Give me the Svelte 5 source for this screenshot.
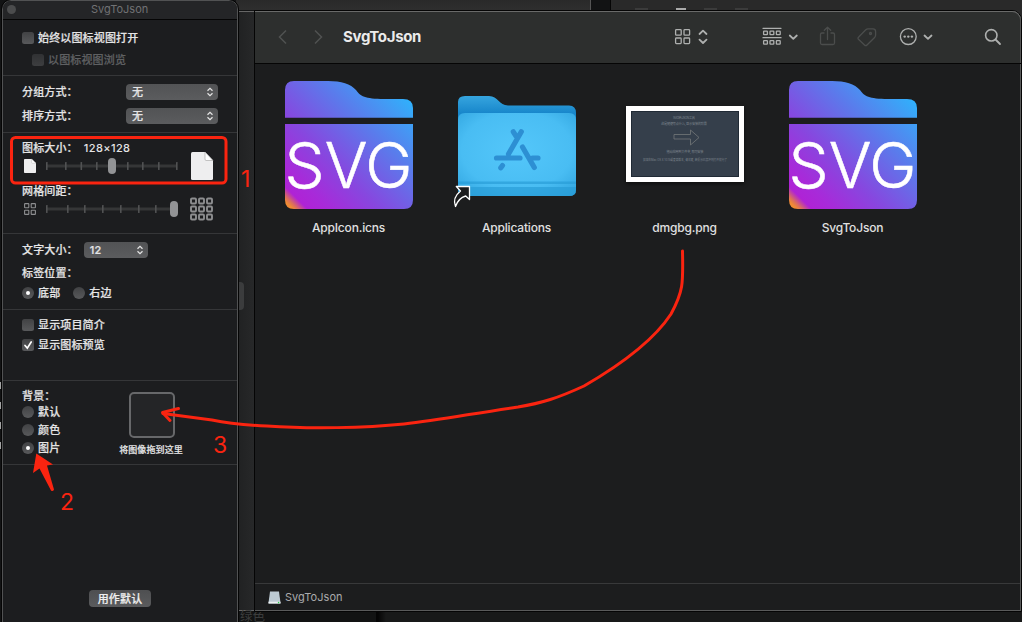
<script>
  const sizeTicks = [0, 19, 34.5, 50, 65.5, 81, 96, 112, 130];
  const gridTicks = [0, 21, 38, 56, 74, 92, 109, 126];
  const files = [
    { name: 'AppIcon.icns', kind: 'svg' },
    { name: 'Applications', kind: 'apps' },
    { name: 'dmgbg.png', kind: 'image' },
    { name: 'SvgToJson', kind: 'svg' }
  ];
  const nine = [0, 1, 2, 3, 4, 5, 6, 7, 8];
</script>

{#snippet popup(value, width)}
  <div class="popup" style="width:{width}px">
    <span>{value}</span>
    <svg width="8" height="10" viewBox="0 0 8 10"><path d="M1.5 3.7 4 1.3 6.5 3.7M1.5 6.3 4 8.7 6.5 6.3" /></svg>
  </div>
{/snippet}

{#snippet slider(ticks, value)}
  <svg class="slider" width="136" height="20" viewBox="-2 0 136 20">
    <rect x="0" y="8.5" width="131" height="3" fill="#353637" />
    {#each ticks as t}<rect x={t} y="6" width="1.6" height="8" rx=".5" fill="#515253" />{/each}
    <rect x={value - 4} y="2" width="8" height="16" rx="4" fill="#929395" />
  </svg>
{/snippet}

{#snippet page(w, h)}
  <svg width={w} height={h} viewBox="0 0 22 28" preserveAspectRatio="none">
    <path d="M1.5 0H14L22 8.500V26.500Q22 28 20.500 28H1.500Q0 28 0 26.500V1.500Q0 0 1.500 0Z" fill="#eeeeef" />
    <path d="M14 0 22 8.500H15Q14 8.500 14 7Z" fill="#fff" stroke="#aaa" stroke-width=".7" />
  </svg>
{/snippet}

<div class="desktop">
  <div class="strip top-left"></div>
  <div class="strip top-right"><i></i><i></i><i></i><i></i></div>
  <div class="strip side"></div>
  <div class="strip bottom"><span>绿色</span></div>
  <div class="strip edge"><i></i><i></i><i></i><i></i></div>

  <section class="finder">
    <header>
      <svg class="dim" width="9" height="16" viewBox="0 0 9 16"><path d="M8 1.500 1.500 8 8 14.500" /></svg>
      <svg class="dim fwd" width="9" height="16" viewBox="0 0 9 16"><path d="M1 1.500 7.500 8 1 14.500" /></svg>
      <h1>SvgToJson</h1>
      <svg class="tools" width="340" height="30" viewBox="670 22 340 30">
        <g class="on">
          <rect x="675.600" y="29.600" width="5.600" height="5.600" rx=".8" /><rect x="684" y="29.600" width="5.600" height="5.600" rx=".8" />
          <rect x="675.600" y="38" width="5.600" height="5.600" rx=".8" /><rect x="684" y="38" width="5.600" height="5.600" rx=".8" />
          <path class="bold" d="m699.500 34 3.500-3.300 3.500 3.300m-7 5.700 3.500 3.300 3.500-3.300" />
          <path d="M763 28.300h18M763 37.700h18" />
          {#each [0, 1, 2] as c}
            <rect x={763.6 + c * 6.4} y="31.200" width="3.800" height="3.500" rx=".5" />
            <rect x={763.6 + c * 6.4} y="40.700" width="3.800" height="3.500" rx=".5" />
          {/each}
          <path class="bold" d="m789.800 35.500 3.500 3.300 3.500-3.300M924.500 35.500l3.500 3.300 3.500-3.300" />
          <circle cx="908.300" cy="36.600" r="7.900" />
          <g class="dots"><circle cx="904.700" cy="36.600" r="1.200" /><circle cx="908.300" cy="36.600" r="1.200" /><circle cx="911.900" cy="36.600" r="1.200" /></g>
          <circle cx="991.300" cy="35.300" r="5.700" stroke-width="1.600" /><path class="bold" d="m995.500 39.500 4.500 4.500" />
        </g>
        <g class="off">
          <path d="M824 33h-2Q820.500 33 820.500 34.500V43Q820.500 44.500 822 44.500H833Q834.500 44.500 834.500 43V34.500Q834.500 33 833 33H831M827.500 39.500V27.300M824.300 30.300 827.500 27.200 830.700 30.300" />
          <path d="M868 28.800H873Q875.500 28.800 875.600 31.500V35Q875.600 36.500 874.600 37.500L867 45Q865.800 46.300 864.500 45L858.700 39.600Q857.300 38.300 858.700 37L865.800 29.800Q866.800 28.800 868 28.800Z" /><circle cx="870.500" cy="33.500" r="1" />
        </g>
      </svg>
    </header>
    <main>
      {#each files as f}
        <figure>
          {#if f.kind === 'svg'}
            <svg width="128" height="128" viewBox="0 0 128 128">
              <defs>
                <linearGradient id="folder" gradientUnits="userSpaceOnUse" x1="4" y1="124" x2="124" y2="4">
                  <stop offset="0" stop-color="#ef8a35" /><stop offset=".02" stop-color="#dc6f5c" /><stop offset=".06" stop-color="#af23d5" /><stop offset=".15" stop-color="#a82ad9" />
                  <stop offset=".36" stop-color="#8747df" /><stop offset=".64" stop-color="#5c79eb" /><stop offset=".82" stop-color="#439af4" /><stop offset="1" stop-color="#27bbff" />
                </linearGradient>
              </defs>
              <path fill="url(#folder)" d="M0 36.700V9Q0 0 9 0H43Q63 0 71 9C75 15 80 18 99 18H118Q128 18 128 27V36.700ZM0 43H128V119Q128 128 119 128H9Q0 128 0 119Z" />
              <text x="-.5" y="106.500" textLength="128" lengthAdjust="spacingAndGlyphs">SVG</text>
            </svg>
          {:else if f.kind === 'apps'}
            <svg width="128" height="128" viewBox="453 81 128 128">
              <defs>
                <radialGradient id="front" cx=".5" cy=".45" r=".72"><stop offset="0" stop-color="#54c7fa" /><stop offset=".65" stop-color="#49bdf3" /><stop offset="1" stop-color="#30a4df" /></radialGradient>
                <linearGradient id="back" x1="0" y1="0" x2="0" y2="1"><stop offset="0" stop-color="#36a5df" /><stop offset=".18" stop-color="#1887cb" /></linearGradient>
              </defs>
              <path fill="url(#back)" d="M458 190V102Q458 96 465 96H489C498 96 499 105.500 508 105.500H569Q576 105.500 576 113V190Z" />
              <path fill="url(#front)" d="M458 120Q458 113 465 113H569Q576 113 576 120V190Q576 196 569 196H465Q458 196 458 190Z" />
              <path fill="#279bd5" opacity=".65" d="M458 181.500H576V184H458ZM458 187H576V190Q576 196 569 196H465Q458 196 458 190Z" />
              <path fill="none" stroke="#2d8fd3" stroke-width="5.200" stroke-linecap="round" d="M513.300 131.800 516 136M521.300 131.800 508.500 154M496.500 158H520" />
              <path fill="none" stroke="#2d8fd3" stroke-width="5.200" stroke-linecap="round" d="M522.500 147 534.300 167.500M532.500 158H538M502.500 165.500 500.800 167.800" />
              <path fill="#1c1d1e" stroke="#fff" stroke-width="1.300" stroke-linejoin="round" d="M456.300 186.500H469.500V199.500L465.700 196Q458.500 198 455.500 206.500 452 198 460.500 191Z" />
            </svg>
          {:else}
            <div class="shot">
              <svg width="108" height="66" viewBox="0 0 108 66">
                <rect x=".5" y=".5" width="107" height="65" fill="#353f4b" stroke="#202a35" />
                <g font-size="3.200" fill="#7d858d" text-anchor="middle">
                  <text x="53" y="7.500" textLength="22">SVG转JSON工具</text><text x="53" y="13.700" textLength="46">这是随便写点什么, 显示安装的背景</text>
                  <text x="54" y="41.700" textLength="37">拖动应用到文件夹, 即可安装</text><text x="54" y="50" textLength="84" lengthAdjust="spacingAndGlyphs">如果在Mac OS X 10.15或更高版本, 请右键, 若提示已损坏则打开就行了</text>
                </g>
                <path d="M43 23.500H59.500V19L68 26.500 59.500 34V28H43Z" fill="none" stroke="#747778" stroke-width=".8" />
              </svg>
            </div>
          {/if}
          <figcaption>{f.name}</figcaption>
        </figure>
      {/each}
    </main>
    <footer>
      <svg width="13" height="13" viewBox="0 0 13 13"><path d="M2 .5H11L12.500 12Q12.500 12.500 12 12.500H1Q.5 12.500 .5 12Z" fill="#bdcbd4" /><path d="M.5 10.700H12.500V12.500H.5Z" fill="#edf1f2" /><circle cx="10.600" cy="11.600" r=".8" fill="#31cc50" /></svg>
      <span>SvgToJson</span>
    </footer>
  </section>

  <aside>
    <div class="title"><i></i><span>SvgToJson</span></div>
    <div class="group view">
      <div class="row"><b class="check"></b>始终以图标视图打开</div>
      <div class="row nested"><b class="check"></b>以图标视图浏览</div>
    </div>
    <div class="group sort">
      <div class="row between">分组方式：{@render popup('无', 92)}</div>
      <div class="row between">排序方式：{@render popup('无', 92)}</div>
    </div>
    <div class="group sizes">
      <div class="label">图标大小：<span class="dim-text">128×128</span></div>
      <div class="slide">
        <div class="small">{@render page(12, 14)}</div>
        {@render slider(sizeTicks, 66)}
        <div class="large">{@render page(22, 28)}</div>
      </div>
      <div class="label second">网格间距：</div>
      <div class="slide">
        <div class="small"><svg width="12" height="12" viewBox="0 0 12 12" class="cells">
          {#each [0, 1, 2, 3] as n}<rect x={0.6 + (n % 2) * 6.6} y={0.6 + Math.floor(n / 2) * 6.6} width="4.200" height="4.200" rx=".5" stroke-width="1.100" />{/each}
        </svg></div>
        {@render slider(gridTicks, 128)}
        <div class="large"><svg width="24" height="24" viewBox="0 0 24 24" class="cells">
          {#each nine as n}<rect x={1 + (n % 3) * 8} y={1.5 + Math.floor(n / 3) * 8} width="5" height="5" rx="1" stroke-width="1.900" />{/each}
        </svg></div>
      </div>
    </div>
    <div class="group text">
      <div class="row">文字大小：<span class="fontsize">{@render popup('12', 64)}</span></div>
      <div class="row position">标签位置：</div>
      <div class="row"><b class="radio on"></b>底部<b class="radio next"></b>右边</div>
    </div>
    <div class="group options">
      <div class="row"><b class="check"></b>显示项目简介</div>
      <div class="row"><b class="check"><svg width="12" height="12" viewBox="0 0 12 12"><path d="m3 6.500 2.300 2.600L9.200 3" /></svg></b>显示图标预览</div>
    </div>
    <div class="group background">
      <div>
        <div class="heading">背景：</div>
        <div class="row"><b class="radio"></b>默认</div>
        <div class="row"><b class="radio"></b>颜色</div>
        <div class="row"><b class="radio on"></b>图片</div>
      </div>
      <div class="drop"><div class="well"></div><span>将图像拖到这里</span></div>
    </div>
    <button>用作默认</button>
  </aside>

  <svg class="marks" width="1022" height="622" viewBox="0 0 1022 622">
    <rect x="11.500" y="137.500" width="214.500" height="45.500" rx="4" stroke-width="3" />
    <path stroke-width="3" d="M682.500 251C683 282 684 290 671 314C654 340 622 364 584 386C558 398 542 403 518 407C475 413 440 420 404 424C365 428 310 429 267 426C245 425 231 424 212 420L163 413.500" />
    <path stroke-width="3" d="M178.500 408.500 162.500 412.500 170 420.500" />
    <path class="solid" d="M36.300 453.500 53 464.500 47 465.500 54 489.500Q53 492 51 490.500L39.500 468.500 33 473Z" />
    <g class="solid" font-size="23"><text x="241" y="187">1</text><text x="60" y="510">2</text><text x="213" y="453">3</text></g>
  </svg>
</div>

<style>
  :global(body) { margin: 0; background: #121314; }
  .desktop { position: relative; width: 1022px; height: 622px; overflow: hidden; background: #121314; color: #e4e4e5; font-family: Inter, "Noto Sans CJK SC", sans-serif; }
  .desktop * { box-sizing: border-box; }
  svg { display: block; flex: none; overflow: visible; }
  .strip { position: absolute; }
  .top-left { left: 236px; top: 0; width: 355px; height: 10px; background: linear-gradient(#292929, #2e2e2e); border-right: 1px solid #555; }
  .top-right { left: 610px; top: 0; right: 0; height: 30px; background: #292929; border-left: 1px solid #050505; display: flex; padding: 8px 0 0 24px; gap: 18px; }
  .top-right i { width: 13px; height: 2px; background: #3b3b3b; }
  .top-right i:nth-child(2) { width: 10px; margin-left: 10px; background: #aaa; }
  .side { left: 237px; top: 11px; width: 17px; height: 600px; background: linear-gradient(90deg, #202122, #272829); border-top: 1px solid #666; border-bottom: 1px solid #666; display: flex; }
  .side::after { content: ""; width: 7px; height: 28px; margin-top: 270px; border-radius: 0 4px 4px 0; background: #3b3c3d; }
  .bottom { left: 238px; right: 0; top: 611px; height: 11px; background: linear-gradient(90deg, #121313 138px, #050505 138px, #050505 140px, #181919 148px); color: #3b3c3c; font-size: 12.500px; line-height: 11px; padding-left: 2px; }
  .edge { left: 0; top: 382px; width: 1px; display: flex; flex-direction: column; gap: 13px; }
  .edge i { height: 7px; background: #a5a6a6; }

  .finder { position: absolute; left: 254px; top: 10px; width: 768px; height: 602px; background: #1c1d1e; border: 1px solid #050505; border-radius: 0 10px 0 0; box-shadow: inset 0 1px #696a69, inset -1px -1px #5a5b5b; display: flex; flex-direction: column; }
  header { height: 53px; flex: none; display: flex; align-items: center; padding: 0 0 0 23px; background: #2d2f2e; border-bottom: 1px solid #050505; border-radius: 0 9px 0 0; box-shadow: inset 0 1px #696a69, inset -1px 0 #555; }
  header .dim path { fill: none; stroke: #505251; stroke-width: 1.500; }
  header .fwd { margin-left: 27px; }
  h1 { width: 100px; margin: 0 0 0 20px; font-size: 15px; line-height: 20px; letter-spacing: -.32px; font-weight: 700; color: #ebebeb; }
  .tools { margin-left: 227px; }
  .tools .on, .tools .off { fill: none; stroke: #aeb0af; stroke-width: 1.300; stroke-linecap: round; stroke-linejoin: round; }
  .tools .off { stroke: #4b4d4c; }
  .tools .bold { stroke-width: 1.800; }
  .tools .dots { fill: #aeb0af; stroke: none; }
  main { flex: 1; display: grid; grid-template-columns: repeat(4, 168px); align-content: start; padding: 17px 0 0 10px; }
  figure { margin: 0; display: flex; flex-direction: column; align-items: center; }
  figure > svg text { font-family: Inter, "Liberation Sans", sans-serif; font-size: 62.500px; font-weight: 300; fill: #fff; stroke: #fff; stroke-width: .5px; }
  figcaption { margin: 11px 1px 0 0; font-size: 12px; line-height: 16px; font-weight: 500; letter-spacing: -.17px; color: #e0e0e0; }
  .shot { width: 118px; height: 76px; margin: 25px 0 27px; padding: 5px; background: #fff; box-shadow: 0 2px 4px #0008; }
  footer { height: 28px; flex: none; margin-right: 1px; display: flex; align-items: center; gap: 4px; padding: 0 0 1px 13px; border-top: 1px solid #38393a; font-size: 11px; letter-spacing: .04px; color: #aaabac; }

  aside { position: absolute; left: 2px; top: 0; width: 236px; height: 632px; display: flex; flex-direction: column; background: #1c1d1f; border: 1px solid #515253; border-radius: 9px; outline: 1px solid #050505; font-size: 11px; letter-spacing: .15px; font-weight: 500; -webkit-text-stroke: .2px; }
  .title { height: 19px; flex: none; display: flex; align-items: center; padding-left: 4px; border-bottom: 1px solid #050505; border-radius: 8px 8px 0 0; background: #242527; color: #717274; font-size: 11px; font-weight: 400; letter-spacing: 0; -webkit-text-stroke: 0; line-height: 17px; padding-bottom: 1px; }
  .title i { width: 9px; height: 9px; border-radius: 50%; background: #4b4c4d; }
  .title span { margin-left: 75px; }
  .group { flex: none; padding-left: 19px; border-bottom: 1px solid #353638; }
  .row { display: flex; align-items: center; height: 20px; line-height: 14px; white-space: nowrap; }
  .view { height: 56px; padding-top: 7px; }
  .view .row { height: 22px; }
  .nested { padding-left: 10px; color: #5f6062; }
  .nested .check { opacity: .55; }
  .sort { height: 57px; padding: 4px 19px 0 19px; }
  .sort .row { height: 24px; }
  .between { justify-content: space-between; }
  .popup { height: 16px; display: flex; align-items: center; justify-content: space-between; padding: 0 4px 0 6px; border-radius: 4px; background: linear-gradient(#525355, #5b5c5e); }
  .popup path { fill: none; stroke: #e6e6e6; stroke-width: 1.200; }
  .check, .radio { width: 12px; height: 12px; flex: none; margin-right: 4px; background: linear-gradient(#414244, #58595b); border-radius: 2.500px; }
  .check path { fill: none; stroke: #fff; stroke-width: 1.700; stroke-linecap: round; }
  .radio { border-radius: 50%; display: grid; place-items: center; }
  .radio.on::after { content: ""; width: 4.400px; height: 4.400px; border-radius: 50%; background: #fff; }
  .next { margin-left: 13px; }
  .sizes { height: 101px; padding-top: 7px; }
  .label { height: 16px; line-height: 16px; display: flex; }
  .label.second { margin-top: 7px; }
  .dim-text { margin-left: 6px; letter-spacing: .4px; -webkit-text-stroke: 0; }
  .slide { height: 20px; display: flex; align-items: center; }
  .small { width: 22px; display: flex; padding-left: 2px; }
  .large { width: 24px; display: flex; justify-content: center; margin-left: 10px; }
  .cells rect { fill: none; stroke: #8d8e90; }
  .text { height: 76px; padding-top: 6px; }
  .fontsize { margin-left: 6px; }
  .position { margin-top: 3px; }
  .options { height: 71px; padding-top: 5px; }
  .background { height: 84px; padding-top: 8px; display: flex; }
  .background > div:first-child { width: 91px; }
  .heading { height: 14px; line-height: 15px; }
  .background .row { height: 18px; }
  .drop { width: 78px; padding-top: 3px; display: flex; flex-direction: column; align-items: center; gap: 5px; font-size: 9px; line-height: 14px; letter-spacing: .1px; white-space: nowrap; }
  .drop span { margin-right: 2px; }
  .well { width: 46px; height: 46px; border: 2px solid #67686a; border-radius: 5px; background: #242527; }
  button { width: 62px; height: 17px; margin: 125px 0 0 86px; padding: 0; border: 0; border-radius: 4px; background: linear-gradient(#4e4f51, #5a5b5d); color: #eee; font: inherit; line-height: 16px; letter-spacing: .15px; -webkit-text-stroke: .2px; }

  .marks { position: absolute; inset: 0; pointer-events: none; fill: none; stroke: #fa2410; stroke-linecap: round; stroke-linejoin: round; }
  .solid { fill: #fa2410; stroke: none; }
</style>
